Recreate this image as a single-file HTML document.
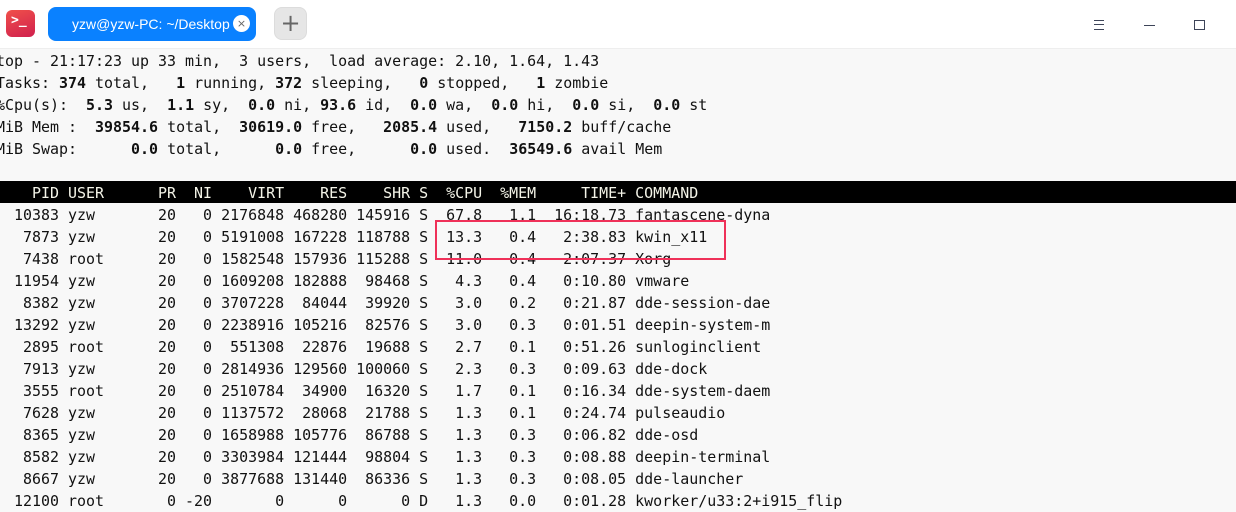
<!DOCTYPE html>
<html><head><meta charset="utf-8"><style>
html,body{margin:0;padding:0;width:1236px;height:511px;overflow:hidden;background:#f8f8f8;}
.title{position:absolute;left:0;top:0;width:1236px;height:48px;background:#fff;border-bottom:1px solid #eee;}
.icon{position:absolute;left:6px;top:10px;width:29px;height:27px;border-radius:6px;background:linear-gradient(160deg,#f0504a,#d0204e);}
.icon span{position:absolute;left:5px;top:3px;color:#fff;font:bold 13px "DejaVu Sans Mono",monospace;}
.tab{position:absolute;left:48px;top:7px;width:208px;height:34px;border-radius:8px;background:#0a81ff;color:#fff;font:14px "Liberation Sans",sans-serif;}
.tab .t{position:absolute;left:24px;top:9px;white-space:nowrap;}
.tab .x{position:absolute;left:185px;top:8px;width:17px;height:17px;border-radius:50%;background:#fff;color:#666;font:11px "DejaVu Sans",sans-serif;text-align:center;line-height:17px;}
.plus{position:absolute;left:274px;top:7px;width:33px;height:33px;border-radius:8px;background:#e6e6e6;border:1px solid #dcdcdc;box-sizing:border-box;color:#666;font:24px "DejaVu Sans",sans-serif;text-align:center;line-height:30px;}
.wb{position:absolute;background:#3d4458;}
pre{position:absolute;left:-4px;top:50px;margin:0;font:14.96px/22px "DejaVu Sans Mono",monospace;color:#111;}
pre b{font-weight:bold;}
.hdr{position:absolute;left:0;top:181px;width:1236px;height:22px;background:#000;}
.hl{position:absolute;left:435px;top:220px;width:287px;height:36px;border:2px solid #ef3159;}
</style></head><body>
<div class="title">
<div class="icon"><span>&gt;_</span></div>
<div class="tab"><span class="t">yzw@yzw-PC: ~/Desktop</span><span class="x">×</span></div>
<div class="plus">+</div>
<div class="wb" style="left:1094px;top:20px;width:10px;height:1px"></div>
<div class="wb" style="left:1094px;top:24px;width:10px;height:1px"></div>
<div class="wb" style="left:1094px;top:29px;width:10px;height:1px"></div>
<div class="wb" style="left:1144px;top:25px;width:11px;height:1px"></div>
<div style="position:absolute;left:1194px;top:20px;width:9px;height:8px;border:1px solid #3d4458"></div>
</div>
<div class="hdr"></div>
<pre>top - 21:17:23 up 33 min,  3 users,  load average: 2.10, 1.64, 1.43
Tasks: <b>374</b> total,   <b>1</b> running, <b>372</b> sleeping,   <b>0</b> stopped,   <b>1</b> zombie
%Cpu(s):  <b>5.3</b> us,  <b>1.1</b> sy,  <b>0.0</b> ni, <b>93.6</b> id,  <b>0.0</b> wa,  <b>0.0</b> hi,  <b>0.0</b> si,  <b>0.0</b> st
MiB Mem :  <b>39854.6</b> total,  <b>30619.0</b> free,   <b>2085.4</b> used,   <b>7150.2</b> buff/cache
MiB Swap:      <b>0.0</b> total,      <b>0.0</b> free,      <b>0.0</b> used.  <b>36549.6</b> avail Mem

<span style="color:#f4f4e8">    PID USER      PR  NI    VIRT    RES    SHR S  %CPU  %MEM     TIME+ COMMAND</span>
  10383 yzw       20   0 2176848 468280 145916 S  67.8   1.1  16:18.73 fantascene-dyna
   7873 yzw       20   0 5191008 167228 118788 S  13.3   0.4   2:38.83 kwin_x11
   7438 root      20   0 1582548 157936 115288 S  11.0   0.4   2:07.37 Xorg
  11954 yzw       20   0 1609208 182888  98468 S   4.3   0.4   0:10.80 vmware
   8382 yzw       20   0 3707228  84044  39920 S   3.0   0.2   0:21.87 dde-session-dae
  13292 yzw       20   0 2238916 105216  82576 S   3.0   0.3   0:01.51 deepin-system-m
   2895 root      20   0  551308  22876  19688 S   2.7   0.1   0:51.26 sunloginclient
   7913 yzw       20   0 2814936 129560 100060 S   2.3   0.3   0:09.63 dde-dock
   3555 root      20   0 2510784  34900  16320 S   1.7   0.1   0:16.34 dde-system-daem
   7628 yzw       20   0 1137572  28068  21788 S   1.3   0.1   0:24.74 pulseaudio
   8365 yzw       20   0 1658988 105776  86788 S   1.3   0.3   0:06.82 dde-osd
   8582 yzw       20   0 3303984 121444  98804 S   1.3   0.3   0:08.88 deepin-terminal
   8667 yzw       20   0 3877688 131440  86336 S   1.3   0.3   0:08.05 dde-launcher
  12100 root       0 -20       0      0      0 D   1.3   0.0   0:01.28 kworker/u33:2+i915_flip</pre>
<div class="hl"></div>
</body></html>
